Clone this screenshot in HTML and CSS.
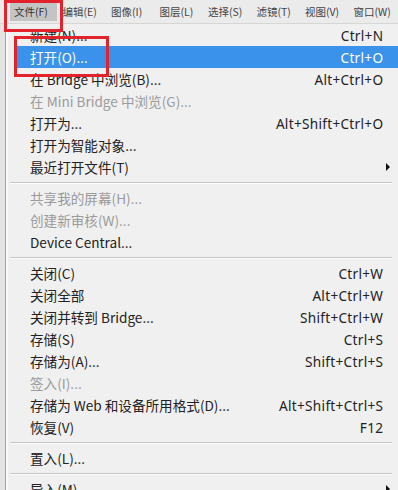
FILE: index.html
```html
<!DOCTYPE html>
<html>
<head>
<meta charset="utf-8">
<link rel="stylesheet" href="styles.css">
</head>
<body>
<div class="menubar">
  <span class="mb-item active">文件(F)</span>
  <span class="mb-item">编辑(E)</span>
  <span class="mb-item">图像(I)</span>
  <span class="mb-item">图层(L)</span>
  <span class="mb-item">选择(S)</span>
  <span class="mb-item">滤镜(T)</span>
  <span class="mb-item">视图(V)</span>
  <span class="mb-item">窗口(W)</span>
</div>
<div class="menu">
  <div class="item"><span>新建(N)...</span><span class="key">Ctrl+N</span></div>
  <div class="item hl"><span>打开(O)...</span><span class="key">Ctrl+O</span></div>
  <div class="item"><span>在 Bridge 中浏览(B)...</span><span class="key">Alt+Ctrl+O</span></div>
  <div class="item dis"><span>在 Mini Bridge 中浏览(G)...</span><span class="key"></span></div>
  <div class="item"><span>打开为...</span><span class="key">Alt+Shift+Ctrl+O</span></div>
  <div class="item"><span>打开为智能对象...</span><span class="key"></span></div>
  <div class="item"><span>最近打开文件(T)</span><span class="arrow"></span></div>
  <div class="sep"></div>
  <div class="item dis"><span>共享我的屏幕(H)...</span><span class="key"></span></div>
  <div class="item dis"><span>创建新审核(W)...</span><span class="key"></span></div>
  <div class="item"><span>Device Central...</span><span class="key"></span></div>
  <div class="sep"></div>
  <div class="item"><span>关闭(C)</span><span class="key">Ctrl+W</span></div>
  <div class="item"><span>关闭全部</span><span class="key">Alt+Ctrl+W</span></div>
  <div class="item"><span>关闭并转到 Bridge...</span><span class="key">Shift+Ctrl+W</span></div>
  <div class="item"><span>存储(S)</span><span class="key">Ctrl+S</span></div>
  <div class="item"><span>存储为(A)...</span><span class="key">Shift+Ctrl+S</span></div>
  <div class="item dis"><span>签入(I)...</span><span class="key"></span></div>
  <div class="item"><span>存储为 Web 和设备所用格式(D)...</span><span class="key">Alt+Shift+Ctrl+S</span></div>
  <div class="item"><span>恢复(V)</span><span class="key">F12</span></div>
  <div class="sep"></div>
  <div class="item"><span>置入(L)...</span><span class="key"></span></div>
  <div class="sep"></div>
  <div class="item"><span>导入(M)</span><span class="arrow"></span></div>
</div>
<div class="mark mark-file"></div>
<div class="mark mark-open"></div>
</body>
</html>
```
FILE: styles.css
```css
html, body {
  margin: 0;
  padding: 0;
}
body {
  width: 398px;
  height: 490px;
  overflow: hidden;
  position: relative;
  background: #e4e4e4;
  font-family: "Noto Sans", "Noto Sans CJK SC", sans-serif;
  color: #222;
}
.menubar {
  height: 24px;
  display: flex;
  align-items: center;
  background: #ebebeb;
  border-bottom: 1px solid #d6d6d6;
  box-sizing: border-box;
  padding-left: 10px;
  font-family: "Noto Sans CJK SC", sans-serif;
  font-size: 10.5px;
  color: #444;
}
.mb-item {
  width: 50px;
  height: 19px;
  line-height: 19px;
  padding-left: 4px;
  box-sizing: border-box;
  white-space: nowrap;
}
.mb-item.active {
  width: 48px;
  margin-right: 2px;
  background: #c4c4c4;
  color: #333;
}
.menu {
  margin-left: 5px;
  border-left: 1px solid #a3a3a3;
  background: #f0f0f0;
  box-shadow: inset 2px 0 0 #fafafa;
}
.item {
  height: 22px;
  margin-left: 8px;
  padding: 0 15px 0 16px;
  display: flex;
  align-items: center;
  justify-content: space-between;
  font-size: 13.6px;
  white-space: nowrap;
}
.item > span:first-child {
  font-family: "Noto Sans CJK SC", sans-serif;
}
.item.hl {
  background: #3a92ea;
  color: #fff;
}
.item.dis {
  color: #9b9b9b;
}
.key {
  font-family: "Noto Sans", sans-serif;
  font-size: 13.6px;
  letter-spacing: 0.3px;
  margin-right: -0.3px;
}
.arrow {
  width: 0;
  height: 0;
  border-top: 4px solid transparent;
  border-bottom: 4px solid transparent;
  border-left: 4px solid #111;
  margin-right: -7px;
}
.sep {
  height: 9px;
  margin: 0 6px 0 4px;
  display: flex;
  align-items: center;
}
.sep::after {
  content: "";
  display: block;
  width: 100%;
  height: 1px;
  background: #c6c6c6;
  box-shadow: 0 1px 0 #fdfdfd;
}
.mark {
  position: absolute;
  border: 3px solid #e2232c;
  box-sizing: border-box;
}
.mark-file {
  left: 4px;
  top: 0;
  width: 59px;
  height: 32px;
}
.mark-open {
  left: 14px;
  top: 36px;
  width: 95px;
  height: 41px;
}
```
